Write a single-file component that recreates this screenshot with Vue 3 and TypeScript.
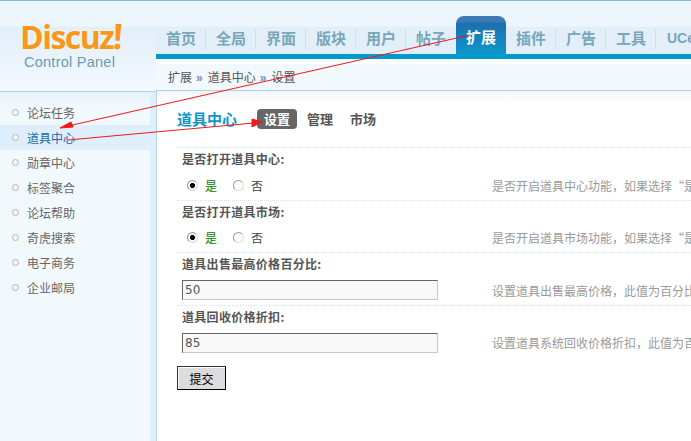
<script setup lang="ts">
const tabs = ['首页', '全局', '界面', '版块', '用户', '帖子', '扩展', '插件', '广告', '工具', 'UCenter']
const menu = ['论坛任务', '道具中心', '勋章中心', '标签聚合', '论坛帮助', '奇虎搜索', '电子商务', '企业邮局']
const rows = [
  { title: '是否打开道具中心:', kind: 'radio', value: '', desc: '是否开启道具中心功能\uFF0C如果选择\u201C是\u201D将开启道具中心功能' },
  { title: '是否打开道具市场:', kind: 'radio', value: '', desc: '是否开启道具市场功能\uFF0C如果选择\u201C是\u201D将开启道具市场功能' },
  { title: '道具出售最高价格百分比:', kind: 'input', value: '50', desc: '设置道具出售最高价格\uFF0C此值为百分比的数值' },
  { title: '道具回收价格折扣:', kind: 'input', value: '85', desc: '设置道具系统回收价格折扣\uFF0C此值为百分比的数值' },
]
</script>

<template>
  <div class="page">
    <aside class="side">
      <div class="logo">
        <div class="brand">Discuz<span class="bang">!</span></div>
        <div class="cp">Control Panel</div>
      </div>
      <ul class="menu">
        <li v-for="(m, i) in menu" :key="m" :class="{ on: i === 1 }"><i class="dot"></i>{{ m }}</li>
      </ul>
    </aside>
    <main class="main">
      <nav class="tabs">
        <span v-for="(t, i) in tabs" :key="t" class="tab" :class="{ active: i === 6 }">{{ t }}</span>
      </nav>
      <div class="crumb">
        <div class="crumb-in">扩展<b>»</b>道具中心<b>»</b>设置</div>
      </div>
      <section class="content">
        <div class="sub">
          <h3>道具中心</h3>
          <span class="pill">设置</span>
          <span class="link">管理</span>
          <span class="link">市场</span>
        </div>
        <div v-for="r in rows" :key="r.title" class="row">
          <div class="title">{{ r.title }}</div>
          <div class="field">
            <div v-if="r.kind === 'radio'" class="radios">
              <span class="radio checked"></span><span class="yes">是</span>
              <span class="radio second"></span><span class="no">否</span>
            </div>
            <div v-else class="input">{{ r.value }}</div>
            <div class="desc">{{ r.desc }}</div>
          </div>
        </div>
        <button class="submit">提交</button>
      </section>
    </main>
    <svg class="arrows" width="691" height="441" viewBox="0 0 691 441">
      <g stroke="#f01818" stroke-width="1" fill="#f01818">
        <line x1="470" y1="35" x2="68" y2="126" />
        <polygon points="60,128 71,122 73,127" />
        <line x1="68" y1="140" x2="254" y2="123" />
        <polygon points="262,122 252,119 252,127" />
      </g>
    </svg>
  </div>
</template>

<style>
html, body { margin: 0; background: #fff; }
</style>

<style scoped>
.page {
  position: relative;
  width: 691px;
  height: 441px;
  overflow: hidden;
  display: flex;
  background: #fff;
  font-family: "Noto Sans CJK SC", "Liberation Sans", sans-serif;
  font-size: 12px;
  color: #666;
}
.side {
  width: 156px;
  flex: none;
  display: flex;
  flex-direction: column;
  background: #deeffb;
}
.logo {
  flex: none;
  box-sizing: border-box;
  border-top: 1px solid #86b9e4;
  border-bottom: 1px solid #b8d0e0;
  height: 92px;
  background: linear-gradient(#edf5fd 0, #edf5fd 25px, #e2eff9 26px, #edf5fd 70px, #f4f9fe 100%);
  padding: 18px 0 0 20px;
}
.brand {
  font-family: "Open Sans", sans-serif;
  font-weight: 700;
  font-size: 32px;
  line-height: 36px;
  height: 36px;
  letter-spacing: -1.5px;
  color: #f7981c;
  text-shadow: 0 0 2px #fff;
}
.bang { font-size: 35px; line-height: 30px; margin-left: 0; display: inline-block; transform: skewX(-3deg); }
.cp {
  font-family: "Liberation Sans", sans-serif;
  font-size: 14.5px;
  line-height: 16px;
  margin: -1px 0 0 4px;
  color: #6b9ab5;
  letter-spacing: 0.25px;
}
.menu {
  list-style: none;
  margin: 0;
  padding: 8px 0 0;
  width: 150px;
  flex: 1;
  background: linear-gradient(#e3f1fa, #f2f9fd 14px);
}
.menu li {
  height: 25px;
  line-height: 25px;
  display: flex;
  align-items: center;
  padding-left: 12px;
  font-size: 12px;
  color: #666;
}
.menu li.on { background: #deeffb; color: #2467a5; width: 156px; box-sizing: border-box; }
.dot {
  width: 5px;
  height: 5px;
  border: 1px solid #b3b3b3;
  border-radius: 50%;
  background: #f5f5f5;
  margin-right: 8px;
}
.main { flex: 1; min-width: 0; display: flex; flex-direction: column; }
.tabs {
  height: 54px;
  flex: none;
  box-sizing: border-box;
  border-top: 1px solid #86b9e4;
  background: linear-gradient(#edf5fd 0, #edf5fd 25px, #e2eff9 26px);
  display: flex;
  align-items: flex-end;
  white-space: nowrap;
}
.tab {
  flex: none;
  width: 50px;
  height: 28px;
  line-height: 24px;
  text-align: center;
  font-size: 15px;
  font-weight: 700;
  color: #7aa6ba;
  background: linear-gradient(#d0e0ea, #d0e0ea) right 3px / 1px 20px no-repeat;
}
.tab:nth-child(6) { background: none; }
.tab:last-child { background: none; font-family: "Liberation Sans", sans-serif; padding-left: 11px; text-align: left; width: 90px; font-size: 14px; box-sizing: border-box; }
.tab.active {
  height: 38px;
  line-height: 42px;
  color: #fff;
  border-radius: 8px 8px 0 0;
  background: linear-gradient(#3d7ab5 0, #3c7ab4 6px, #1d6fae 7px, #0d96cc 100%);
}
.crumb {
  height: 37px;
  flex: none;
  box-sizing: border-box;
  border-top: 5px solid #0099cc;
  border-bottom: 1px solid #b8d0dc;
  background: #fff;
  padding-top: 5px;
}
.crumb-in {
  height: 26px;
  line-height: 25px;
  padding-left: 12px;
  background: #f2f9fd;
  color: #555;
  font-size: 12px;
}
.crumb-in b { color: #6b8fb8; font-weight: 700; font-family: "Liberation Sans", sans-serif; margin: 0 5px 0 4px; }
.content {
  flex: 1;
  box-sizing: border-box;
  border-left: 1px solid #b8d4e6;
  padding-left: 20px;
  background: linear-gradient(#eef6fb, #fff 10px) no-repeat;
  background-size: 100% 12px;
  white-space: nowrap;
}
.sub { display: flex; align-items: center; box-sizing: border-box; height: 55px; margin-bottom: 1px; }
.sub h3 { margin: 0 20px 0 0; font-size: 15px; font-weight: 700; color: #0d96cc; width: 60px; }
.pill {
  width: 40px;
  height: 20px;
  line-height: 19px;
  border-radius: 4px;
  background: #666;
  color: #fff;
  text-align: center;
  font-weight: 700;
  font-size: 13px;
  margin-right: 3px;
}
.link { width: 40px; text-align: center; font-size: 13px; font-weight: 700; color: #555; margin-right: 3px; }
.row {
  border-top: 1px dotted #d5e6f2;
  height: 52.5px;
  box-sizing: border-box;
  padding: 2px 0 0 5px;
  width: 560px;
}
.title { font-weight: 700; color: #555; line-height: 18px; height: 18px; letter-spacing: 0.3px; }
.field { display: flex; align-items: center; height: 30px; margin-top: 2px; }
.radios { width: 310px; flex: none; display: flex; align-items: center; padding-left: 5px; box-sizing: border-box; }
.radio {
  width: 9px;
  height: 9px;
  border: 1px solid #999;
  border-bottom-color: #ddd;
  border-right-color: #ddd;
  border-radius: 50%;
  background: #fff;
  flex: none;
}
.radio.checked { background: radial-gradient(circle, #000 0 2.2px, #f4f4f4 2.8px); }
.radio.second { margin-left: 16px; }
.yes { color: #008000; margin-left: 7px; }
.no { color: #444; margin-left: 7px; }
.input {
  width: 256px;
  height: 20px;
  box-sizing: border-box;
  border: 1px solid #c8c8c8;
  border-top-color: #666;
  border-left-color: #666;
  background: #f9f9f9;
  color: #555;
  line-height: 19px;
  padding-left: 2px;
  font-family: "DejaVu Sans", sans-serif;
  font-size: 12px;
  margin-right: 54px;
  flex: none;
}
.desc { color: #999; font-size: 12px; flex: none; }
.submit {
  display: block;
  width: 49px;
  height: 24px;
  margin-top: 9px;
  padding: 0;
  border: 1px solid #000;
  border-top-color: #333;
  border-left-color: #333;
  box-shadow: inset 1px 1px 0 #fff;
  background: #dcdcdc;
  font-family: inherit;
  font-size: 12px;
  color: #000;
}
.arrows { position: absolute; left: 0; top: 0; pointer-events: none; }
</style>
